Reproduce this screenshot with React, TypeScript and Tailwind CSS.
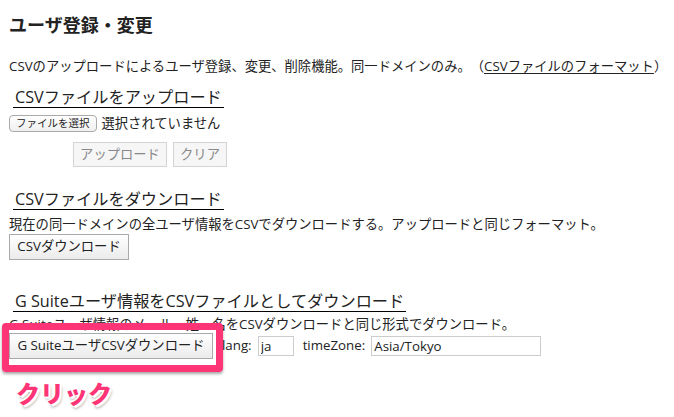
export default function App() {
  const font = { fontFamily: '"Open Sans", "Noto Sans CJK JP", sans-serif' };
  return (
    <div className="relative w-[674px] h-[417px] bg-white text-[#222] overflow-hidden [text-spacing-trim:space-all]" style={font}>
      <div className="px-[9px] pt-[13px]">
        {/* Title */}
        <h2 className="text-[18px] leading-[24px] font-bold text-[#222]">ユーザ登録・変更</h2>

        <p className="mt-[20px] text-[13.3px] leading-[18px] whitespace-nowrap">
          CSVのアップロードによるユーザ登録、変更、削除機能。同一ドメインのみ。（<span className="underline underline-offset-2">CSVファイルのフォーマット</span>）
        </p>

        {/* Upload */}
        <h3 className="mt-[12px] ml-[4px] inline-block px-[2px] text-[16.2px] leading-[20px] border-b border-black">
          CSVファイルをアップロード
        </h3>
        <div className="mt-[6px] flex items-center gap-[5px]">
          <button className="h-[17px] px-[6px] text-[10.5px] leading-[15px] rounded-[4px] border border-[#aaa] bg-gradient-to-b from-white to-[#f0f0f0]">
            ファイルを選択
          </button>
          <span className="text-[13.3px] leading-[17px]">選択されていません</span>
        </div>
        <div className="mt-[10px] ml-[64px] flex gap-[6px]">
          <button className="h-[25px] w-[94px] text-[13.3px] text-[#888] bg-[#f6f6f6] border border-[#d4d4d4]">アップロード</button>
          <button className="h-[25px] w-[54px] text-[13.3px] text-[#888] bg-[#f6f6f6] border border-[#d4d4d4]">クリア</button>
        </div>

        {/* Download */}
        <h3 className="mt-[22px] ml-[4px] inline-block px-[2px] text-[16.2px] leading-[20px] border-b border-black">
          CSVファイルをダウンロード
        </h3>
        <p className="mt-[4px] text-[13.3px] leading-[18px] whitespace-nowrap">
          現在の同一ドメインの全ユーザ情報をCSVでダウンロードする。アップロードと同じフォーマット。
        </p>
        <button className="mt-0 h-[26px] w-[120px] text-[13.3px] border border-[#aaa] bg-gradient-to-b from-white to-[#ebebeb]">
          CSVダウンロード
        </button>

        {/* G Suite */}
        <div>
          <h3 className="mt-[31px] ml-[4px] inline-block px-[2px] text-[16.2px] leading-[20px] border-b border-black">
            G Suiteユーザ情報をCSVファイルとしてダウンロード
          </h3>
        </div>
        <p className="mt-[3px] text-[13.3px] leading-[17px] whitespace-nowrap">
          G Suiteユーザ情報のメール、姓、名をCSVダウンロードと同じ形式でダウンロード。
        </p>
        <div className="mt-0 flex items-center text-[13.3px]">
          <button className="h-[26px] w-[204px] border border-[#aaa] bg-gradient-to-b from-white to-[#ebebeb]">
            G SuiteユーザCSVダウンロード
          </button>
          <span className="ml-[9px]">lang:</span>
          <input
            defaultValue="ja"
            className="ml-[6px] h-[20px] w-[36px] px-[2px] border border-[#ccc] text-[13.3px] outline-none"
          />
          <span className="ml-[9px]">timeZone:</span>
          <input
            defaultValue="Asia/Tokyo"
            className="ml-[6px] h-[20px] w-[170px] px-[2px] border border-[#ccc] text-[13.3px] outline-none"
          />
        </div>
      </div>

      {/* Annotation */}
      <div className="absolute left-[2px] top-[323px] w-[221px] h-[49px] rounded-[4px] border-[7px] border-[#fd3475] shadow-[0_2px_3px_rgba(0,0,0,0.35)]" />
      <div
        className="absolute left-[16px] top-[379px] text-[24px] leading-[30px] font-black text-[#fd3475]"
        style={{ textShadow: '2px 2px 0 #fff, -1px -1px 0 #fff, 1px -1px 0 #fff, -1px 1px 0 #fff, 2px 3px 3px rgba(0,0,0,0.35)' }}
      >
        クリック
      </div>
    </div>
  );
}
